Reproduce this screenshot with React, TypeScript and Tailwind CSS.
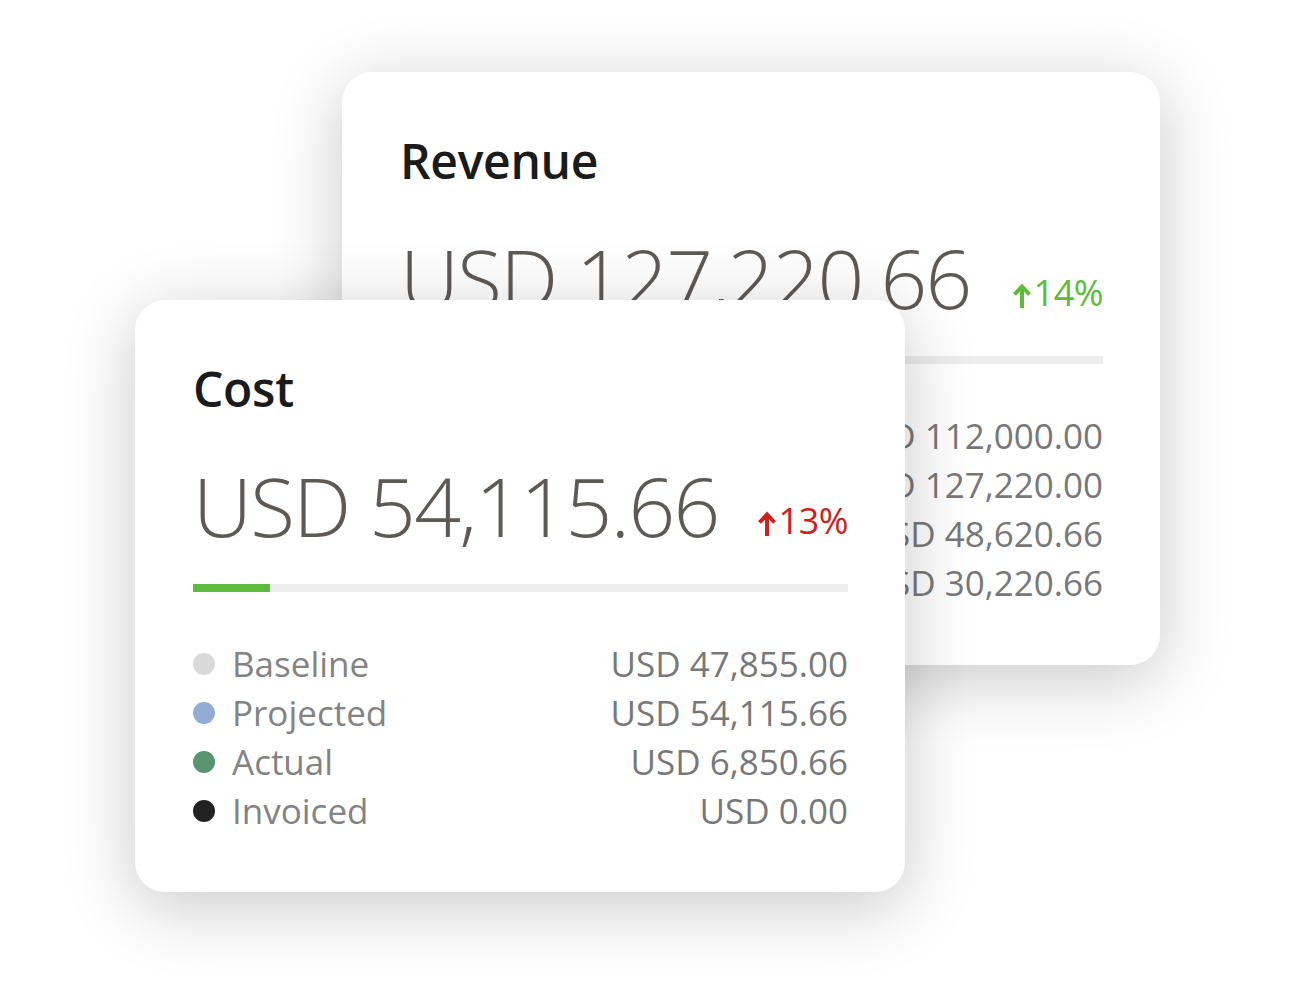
import React from 'react';

interface Row {
  label: string;
  dot: string;
  value: string;
}

interface MetricCardProps {
  title: string;
  amount: string;
  change: string;
  changeClass: string;
  progressClass: string;
  rows: Row[];
  className: string;
}

const UpArrow: React.FC<{ className?: string }> = ({ className }) => (
  <svg width="18" height="25" viewBox="0 0 18 25" className={className} fill="none" stroke="currentColor" strokeWidth={4}>
    <path d="M9 25V4" />
    <path d="M1.5 11.5L9 3.5l7.5 8" />
  </svg>
);

const MetricCard: React.FC<MetricCardProps> = ({ title, amount, change, changeClass, progressClass, rows, className }) => (
  <div
    className={`col-start-1 row-start-1 h-[592px] bg-white rounded-[30px] shadow-[0_14px_70px_rgba(0,0,0,0.22)] pl-[58px] pr-[57px] pt-[65px] flex flex-col ${className}`}
  >
    <h2 className="text-[48px] leading-[48px] font-semibold text-[#1b1b1b] tracking-[-0.3px]">{title}</h2>

    <div className="mt-[51px] flex items-end justify-between h-[82px]">
      <span className="text-[82px] leading-[82px] font-light text-[#5e5955] tracking-[-1.7px] whitespace-nowrap">{amount}</span>
      <span className={`flex items-end gap-[3px] pb-[7px] ${changeClass}`}>
        <UpArrow className="block shrink-0 w-[18px] h-[25px] mb-[3px]" />
        <span className="text-[36px] leading-[36px] tracking-[-0.5px]">{change}</span>
      </span>
    </div>

    {/* progress */}
    <div className="mt-[38px] h-[8px] w-full bg-[#ededed]">
      <div className={`h-full ${progressClass} bg-[#5dbb3c]`} />
    </div>

    {/* legend */}
    <div className="mt-[47px] flex flex-col">
      {rows.map((r) => (
        <div key={r.label} className="flex items-center justify-between h-[49px]">
          <div className="flex items-center gap-[17px]">
            <span className={`w-[22px] h-[22px] rounded-full ${r.dot}`} />
            <span className="text-[35px] leading-none text-[#838383]">{r.label}</span>
          </div>
          <span className="text-[35px] leading-none text-[#787878]">{r.value}</span>
        </div>
      ))}
    </div>
  </div>
);

export default function App() {
  return (
    <div className="w-full h-screen bg-white overflow-hidden" style={{ fontFamily: '"Open Sans", "Noto Sans", sans-serif' }}>
      <div className="grid">
        <MetricCard
          className="ml-[342px] mt-[72px] w-[818px] h-[593px]"
          title="Revenue"
          amount="USD 127,220.66"
          change="14%"
          changeClass="text-[#5dbb3c]"
          progressClass="w-[96px]"
          rows={[
            { label: 'Baseline', dot: 'bg-[#d9d9d9]', value: 'USD 112,000.00' },
            { label: 'Projected', dot: 'bg-[#93acd4]', value: 'USD 127,220.00' },
            { label: 'Actual', dot: 'bg-[#5a9470]', value: 'USD 48,620.66' },
            { label: 'Invoiced', dot: 'bg-[#222222]', value: 'USD 30,220.66' },
          ]}
        />
        <MetricCard
          className="ml-[135px] mt-[300px] w-[770px]"
          title="Cost"
          amount="USD 54,115.66"
          change="13%"
          changeClass="text-[#d0201c]"
          progressClass="w-[77px]"
          rows={[
            { label: 'Baseline', dot: 'bg-[#d9d9d9]', value: 'USD 47,855.00' },
            { label: 'Projected', dot: 'bg-[#93acd4]', value: 'USD 54,115.66' },
            { label: 'Actual', dot: 'bg-[#5a9470]', value: 'USD 6,850.66' },
            { label: 'Invoiced', dot: 'bg-[#222222]', value: 'USD 0.00' },
          ]}
        />
      </div>
    </div>
  );
}
